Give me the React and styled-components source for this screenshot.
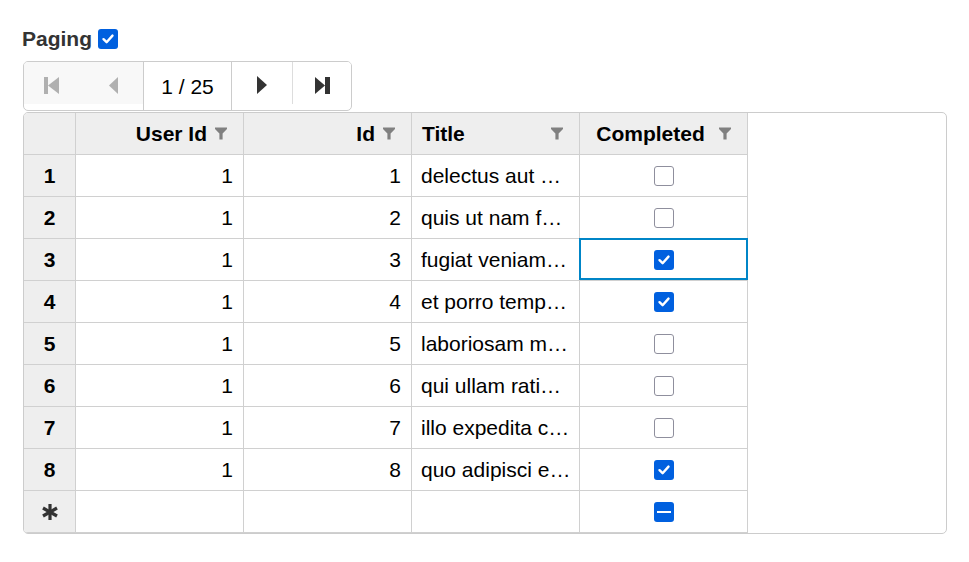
import React from "react";
import styled, { createGlobalStyle, css } from "styled-components";

const GlobalStyle = createGlobalStyle`
  body {
    margin: 0;
    background: #fff;
    font-family: "Liberation Sans", Arial, sans-serif;
  }
`;

const Page = styled.div`
  padding: 28px 0 0 23px;
  width: 924px;
`;

const PagingLabel = styled.label`
  display: flex;
  align-items: center;
  gap: 6px;
  margin-left: -1px;
  height: 22px;
  font-size: 21px;
  font-weight: bold;
  color: #333;
`;

const Box = styled.span`
  box-sizing: border-box;
  display: inline-flex;
  align-items: center;
  justify-content: center;
  width: 20px;
  height: 20px;
  border-radius: 3px;
  ${(p) =>
    p.$on || p.$mixed
      ? css`
          background: #0060df;
          border: none;
        `
      : css`
          background: #fff;
          border: 1px solid #8f8f9d;
        `}
`;

const Check = ({ on, mixed }) => (
  <Box $on={on} $mixed={mixed}>
    {on && (
      <svg width="14" height="14" viewBox="0 0 14 14">
        <path d="M2.5 7.2 L5.6 10.2 L11.5 3.6" fill="none" stroke="#fff" strokeWidth="2.4" strokeLinecap="round" strokeLinejoin="round" />
      </svg>
    )}
    {mixed && <svg width="14" height="4" viewBox="0 0 14 4"><rect x="0" y="1" width="14" height="2" fill="#fff" /></svg>}
  </Box>
);

const Pager = styled.div`
  margin-top: 11px;
  display: flex;
  width: 329px;
  height: 50px;
  box-sizing: border-box;
  border: 1px solid #ccc;
  border-radius: 5px;
  overflow: hidden;
`;

const PagerBtn = styled.div`
  width: ${(p) => p.$w}px;
  height: 42px;
  padding-top: 4px;
  display: flex;
  align-items: center;
  justify-content: center;
  background: ${(p) => (p.$disabled ? "#f8f8f8" : "#fff")};
  border-left: ${(p) => (p.$divider ? "1px solid #ddd" : "none")};
  box-sizing: border-box;
`;

const PagerText = styled.div`
  width: 87px;
  display: flex;
  align-items: center;
  justify-content: center;
  padding-top: 2px;
  font-size: 21px;
  color: #000;
  border-left: 1px solid #ccc;
  border-right: 1px solid #ccc;
`;

const Grid = styled.div`
  width: 924px;
  height: 422px;
  box-sizing: border-box;
  border: 1px solid #ccc;
  border-radius: 5px;
  overflow: hidden;
  margin-top: 1px;
`;

const Table = styled.div`
  display: grid;
  grid-template-columns: 52px 168px 168px 168px 168px;
  grid-auto-rows: 42px;
  width: 724px;
  border-bottom: 1px solid #c4c4c4;
`;

const Cell = styled.div`
  position: relative;
  box-sizing: border-box;
  display: flex;
  align-items: center;
  padding: 0 ${(p) => (p.$align === "flex-end" ? 10 : 8)}px 0 9px;
  font-size: 21px;
  color: #000;
  border-right: 1px solid #d0d0d0;
  border-bottom: 1px solid #d0d0d0;
  justify-content: ${(p) => p.$align || "flex-start"};
  background: #fff;
  min-width: 0;
`;

const HeadCell = styled(Cell)`
  padding: 0 36px 0 10px;
  background: #eeeeee;
  font-weight: bold;
`;

const FilterSlot = styled.span`
  position: absolute;
  right: 16px;
  top: 14px;
  display: flex;
`;

const RowHead = styled(Cell)`
  justify-content: center;
  padding: 0;
  background: #eeeeee;
  font-weight: bold;
`;

const Clip = styled.span`
  white-space: nowrap;
  overflow: hidden;
  text-overflow: ellipsis;
  flex: 1;
  min-width: 0;
`;

const Selected = styled.div`
  position: absolute;
  inset: -1px -1px 0 -1px;
  border: 2px solid #0085c7;
  pointer-events: none;
`;

const Filter = () => (
  <FilterSlot>
    <svg width="12" height="13" viewBox="0 0 12 13">
      <path d="M0 0.5 H12 V2 L7.6 6.4 V12.5 H4.4 V6.4 L0 2 Z" fill="#808080" />
    </svg>
  </FilterSlot>
);

const FirstIcon = ({ c }) => (
  <svg width="15" height="17" viewBox="0 0 15 17" style={{ marginRight: 6 }}>
    <rect x="0" y="0" width="4" height="17" fill={c} />
    <path d="M15 0 V17 L4 8.5 Z" fill={c} />
  </svg>
);
const PrevIcon = ({ c }) => (
  <svg width="9" height="17" viewBox="0 0 9 17">
    <path d="M9 0 V17 L0 8.5 Z" fill={c} />
  </svg>
);
const NextIcon = ({ c }) => (
  <svg width="10" height="18" viewBox="0 0 10 18">
    <path d="M0 0 V18 L10 9 Z" fill={c} />
  </svg>
);
const LastIcon = ({ c }) => (
  <svg width="15" height="17" viewBox="0 0 15 17">
    <path d="M0 0 V17 L10 8.5 Z" fill={c} />
    <rect x="10" y="0" width="5" height="17" fill={c} />
  </svg>
);

const Asterisk = () => (
  <svg width="16" height="16" viewBox="-8 -8 16 16">
    <g stroke="#333" strokeWidth="3.2">
      <line x1="0" y1="-8" x2="0" y2="8" />
      <line x1="-7" y1="-4" x2="7" y2="4" />
      <line x1="-7" y1="4" x2="7" y2="-4" />
    </g>
  </svg>
);

const rows = [
  { title: "delectus aut autem", done: false },
  { title: "quis ut nam facilis et officia qui", done: false },
  { title: "fugiat veniam minus", done: true },
  { title: "et porro tempora", done: true },
  { title: "laboriosam mollitia et enim quasi adipisci quia provident illum", done: false },
  { title: "qui ullam ratione quibusdam voluptatem quia omnis", done: false },
  { title: "illo expedita consequatur quia in", done: false },
  { title: "quo adipisci enim quam ut ab", done: true },
];

export default function App() {
  return (
    <Page>
      <GlobalStyle />
      <PagingLabel>
        Paging <Check on />
      </PagingLabel>
      <Pager>
        <PagerBtn $w={61} $disabled>
          <FirstIcon c="#b0b0b0" />
        </PagerBtn>
        <PagerBtn $w={59} $disabled>
          <PrevIcon c="#b0b0b0" />
        </PagerBtn>
        <PagerText>1 / 25</PagerText>
        <PagerBtn $w={61}>
          <NextIcon c="#333" />
        </PagerBtn>
        <PagerBtn $w={59} $divider>
          <LastIcon c="#333" />
        </PagerBtn>
      </Pager>
      <Grid>
        <Table>
          <RowHead />
          <HeadCell $align="flex-end">
            User Id <Filter />
          </HeadCell>
          <HeadCell $align="flex-end">
            Id <Filter />
          </HeadCell>
          <HeadCell>
            Title <Filter />
          </HeadCell>
          <HeadCell $align="center">
            Completed <Filter />
          </HeadCell>
          {rows.map((r, i) => (
            <React.Fragment key={i}>
              <RowHead>{i + 1}</RowHead>
              <Cell $align="flex-end">1</Cell>
              <Cell $align="flex-end">{i + 1}</Cell>
              <Cell>
                <Clip>{r.title}</Clip>
              </Cell>
              <Cell $align="center">
                <Check on={r.done} />
                {i === 2 && <Selected />}
              </Cell>
            </React.Fragment>
          ))}
          <RowHead>
            <Asterisk />
          </RowHead>
          <Cell />
          <Cell />
          <Cell />
          <Cell $align="center">
            <Check mixed />
          </Cell>
        </Table>
      </Grid>
    </Page>
  );
}
